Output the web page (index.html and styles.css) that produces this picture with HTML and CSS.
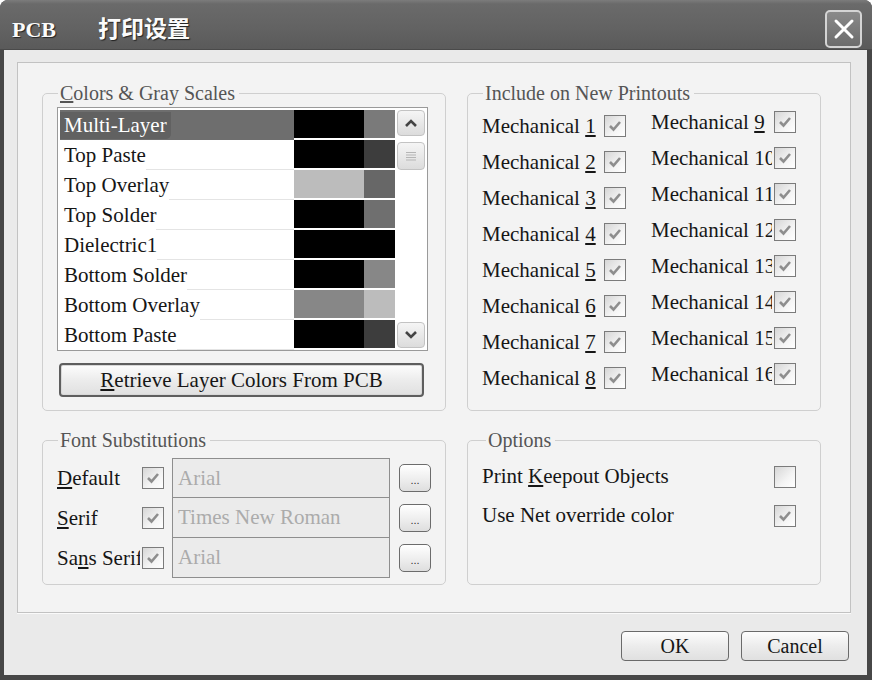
FILE: index.html
```html
<!DOCTYPE html>
<html>
<head>
<meta charset="utf-8">
<title>PCB 打印设置</title>
<link rel="stylesheet" href="styles.css">
</head>
<body>
<div class="window">
  <div class="titlebar">
    <div class="title"><span class="title-en">PCB</span><span class="title-cn">打印设置</span></div>
    <button class="close" aria-label="Close">
      <svg width="22" height="22" viewBox="0 0 22 22"><path d="M3 3 L19 19 M19 3 L3 19" stroke="#fff" stroke-width="3" stroke-linecap="round" fill="none"/></svg>
    </button>
  </div>
  <div class="frame">
    <div class="client">
      <div class="panel">
        <div class="group g-colors">
          <div class="group-title"><u>C</u>olors &amp; Gray Scales</div>
          <div class="layer-list">
            <div class="rows">
              <div class="row selected"><div class="name"><span>Multi-Layer</span></div><span class="sw c-k"></span><span class="sw2 c-77"></span></div>
              <div class="row"><div class="name"><span>Top Paste</span></div><span class="sw c-k"></span><span class="sw2 c-3c"></span></div>
              <div class="row"><div class="name"><span>Top Overlay</span></div><span class="sw c-bb"></span><span class="sw2 c-66"></span></div>
              <div class="row"><div class="name"><span>Top Solder</span></div><span class="sw c-k"></span><span class="sw2 c-70"></span></div>
              <div class="row"><div class="name"><span>Dielectric1</span></div><span class="sw c-k"></span><span class="sw2 c-k"></span></div>
              <div class="row"><div class="name"><span>Bottom Solder</span></div><span class="sw c-k"></span><span class="sw2 c-88"></span></div>
              <div class="row"><div class="name"><span>Bottom Overlay</span></div><span class="sw c-88"></span><span class="sw2 c-bb"></span></div>
              <div class="row"><div class="name"><span>Bottom Paste</span></div><span class="sw c-k"></span><span class="sw2 c-3c"></span></div>
            </div>
            <div class="scrollbar">
              <div class="sb-btn"><svg width="14" height="10" viewBox="0 0 14 10"><path d="M2 8 L7 3 L12 8" stroke="#444" stroke-width="2.6" fill="none"/></svg></div>
              <div class="sb-thumb"><svg width="12" height="12" viewBox="0 0 12 12"><path d="M1 2.5 H11 M1 5 H11 M1 7.5 H11 M1 10 H11" stroke="#b5b5b5" stroke-width="1" fill="none"/></svg></div>
              <div class="sb-track"></div>
              <div class="sb-btn"><svg width="14" height="10" viewBox="0 0 14 10"><path d="M2 2 L7 7 L12 2" stroke="#444" stroke-width="2.6" fill="none"/></svg></div>
            </div>
          </div>
          <button class="btn retrieve"><u>R</u>etrieve Layer Colors From PCB</button>
        </div>

        <div class="group g-include">
          <div class="group-title">Include on New Printouts</div>
          <div class="mech-grid">
            <div class="mech-col">
              <div class="chk-item"><span class="lbl">Mechanical <u>1</u></span><span class="cb"><svg viewBox="0 0 20 20"><path d="M5 10 L8.5 13.5 L15 6"/></svg></span></div>
              <div class="chk-item"><span class="lbl">Mechanical <u>2</u></span><span class="cb"><svg viewBox="0 0 20 20"><path d="M5 10 L8.5 13.5 L15 6"/></svg></span></div>
              <div class="chk-item"><span class="lbl">Mechanical <u>3</u></span><span class="cb"><svg viewBox="0 0 20 20"><path d="M5 10 L8.5 13.5 L15 6"/></svg></span></div>
              <div class="chk-item"><span class="lbl">Mechanical <u>4</u></span><span class="cb"><svg viewBox="0 0 20 20"><path d="M5 10 L8.5 13.5 L15 6"/></svg></span></div>
              <div class="chk-item"><span class="lbl">Mechanical <u>5</u></span><span class="cb"><svg viewBox="0 0 20 20"><path d="M5 10 L8.5 13.5 L15 6"/></svg></span></div>
              <div class="chk-item"><span class="lbl">Mechanical <u>6</u></span><span class="cb"><svg viewBox="0 0 20 20"><path d="M5 10 L8.5 13.5 L15 6"/></svg></span></div>
              <div class="chk-item"><span class="lbl">Mechanical <u>7</u></span><span class="cb"><svg viewBox="0 0 20 20"><path d="M5 10 L8.5 13.5 L15 6"/></svg></span></div>
              <div class="chk-item"><span class="lbl">Mechanical <u>8</u></span><span class="cb"><svg viewBox="0 0 20 20"><path d="M5 10 L8.5 13.5 L15 6"/></svg></span></div>
            </div>
            <div class="mech-col col-right">
              <div class="chk-item"><span class="lbl">Mechanical <u>9</u></span><span class="cb"><svg viewBox="0 0 20 20"><path d="M5 10 L8.5 13.5 L15 6"/></svg></span></div>
              <div class="chk-item"><span class="lbl">Mechanical 10</span><span class="cb"><svg viewBox="0 0 20 20"><path d="M5 10 L8.5 13.5 L15 6"/></svg></span></div>
              <div class="chk-item"><span class="lbl">Mechanical 11</span><span class="cb"><svg viewBox="0 0 20 20"><path d="M5 10 L8.5 13.5 L15 6"/></svg></span></div>
              <div class="chk-item"><span class="lbl">Mechanical 12</span><span class="cb"><svg viewBox="0 0 20 20"><path d="M5 10 L8.5 13.5 L15 6"/></svg></span></div>
              <div class="chk-item"><span class="lbl">Mechanical 13</span><span class="cb"><svg viewBox="0 0 20 20"><path d="M5 10 L8.5 13.5 L15 6"/></svg></span></div>
              <div class="chk-item"><span class="lbl">Mechanical 14</span><span class="cb"><svg viewBox="0 0 20 20"><path d="M5 10 L8.5 13.5 L15 6"/></svg></span></div>
              <div class="chk-item"><span class="lbl">Mechanical 15</span><span class="cb"><svg viewBox="0 0 20 20"><path d="M5 10 L8.5 13.5 L15 6"/></svg></span></div>
              <div class="chk-item"><span class="lbl">Mechanical 16</span><span class="cb"><svg viewBox="0 0 20 20"><path d="M5 10 L8.5 13.5 L15 6"/></svg></span></div>
            </div>
          </div>
        </div>

        <div class="group g-fonts">
          <div class="group-title">Font Substitutions</div>
          <div class="font-grid">
            <span class="flbl"><u>D</u>efault</span><span class="cb"><svg viewBox="0 0 20 20"><path d="M5 10 L8.5 13.5 L15 6"/></svg></span><span class="tbox">Arial</span><button class="dots">...</button>
            <span class="flbl"><u>S</u>erif</span><span class="cb"><svg viewBox="0 0 20 20"><path d="M5 10 L8.5 13.5 L15 6"/></svg></span><span class="tbox mid">Times New Roman</span><button class="dots">...</button>
            <span class="flbl">Sa<u>n</u>s Serif</span><span class="cb"><svg viewBox="0 0 20 20"><path d="M5 10 L8.5 13.5 L15 6"/></svg></span><span class="tbox mid">Arial</span><button class="dots">...</button>
          </div>
        </div>

        <div class="group g-options">
          <div class="group-title opt-title">Options</div>
          <div class="opt-list">
            <div class="opt-item"><span>Print <u>K</u>eepout Objects</span><span class="cb"></span></div>
            <div class="opt-item"><span>Use Net override color</span><span class="cb"><svg viewBox="0 0 20 20"><path d="M5 10 L8.5 13.5 L15 6"/></svg></span></div>
          </div>
        </div>
      </div>
      <div class="actions">
        <button class="btn dlg">OK</button>
        <button class="btn dlg">Cancel</button>
      </div>
    </div>
  </div>
</div>
</body>
</html>
```

FILE: styles.css
```css
* { box-sizing: border-box; }
html, body { margin: 0; padding: 0; background: #fff; }
body { font-family: "Liberation Serif", "Times New Roman", serif; color: #161616; }

.window {
  width: 872px; height: 680px;
  display: flex; flex-direction: column;
  border-radius: 8px 8px 0 0;
  overflow: hidden;
  background: #474747;
}

.titlebar {
  height: 50px; flex: none;
  display: flex; align-items: center; justify-content: space-between;
  padding: 0 10px 0 12px;
  background: linear-gradient(#7c7c7c 0px, #6a6a6a 4px, #626262 60%, #5a5a5a 100%);
  border-bottom: 1px solid #4a4a4a;
}
.title {
  font-family: "Liberation Serif", "Noto Sans CJK SC", serif;
  font-weight: bold; font-size: 22px; color: #fbfbfb;
  text-shadow: 1px 1px 1px #222;
  display: flex; align-items: baseline;
  margin-top: 4px;
}
.title-cn { margin-left: 42px; font-family: "Noto Sans CJK SC", sans-serif; font-size: 23px; }
.close {
  width: 37px; height: 38px; padding: 0;
  display: flex; align-items: center; justify-content: center;
  border: 2px solid #d4d4d4; border-radius: 5px;
  background: linear-gradient(#8a8a8a, #6c6c6c);
  margin-top: 8px;
}

.frame { flex: 1; display: flex; padding: 0 5px 5px 4px; background: #474747; }
.client {
  flex: 1; display: flex; flex-direction: column;
  padding: 12px 16px 0 13px;
  background: #eaeaea;
}

.panel {
  height: 551px;
  border: 1px solid #c2c2c2;
  box-shadow: 0 1px 0 #fafafa;
  background: #f3f3f3;
  padding: 30px 29px 0 24px;
  display: grid;
  grid-template-columns: 404px 354px;
  grid-template-rows: 318px 145px;
  column-gap: 21px; row-gap: 29px;
}

.group {
  border: 1px solid #cfcfcf;
  border-radius: 5px;
  display: flex; flex-direction: column;
}
.group-title {
  margin: -12px 0 0 15px;
  padding: 0 4px 0 2px;
  width: fit-content;
  background: #f3f3f3;
  font-size: 20px; line-height: 22px;
  color: #555;
}
.opt-title { margin-left: 18px; }

/* layer list */
.layer-list {
  margin: 3px 0 0 14px;
  width: 371px; height: 244px;
  border: 1px solid #9a9a9a;
  background: #fff;
  display: flex;
}
.rows { flex: 1; padding: 2px 0 0 2px; display: flex; flex-direction: column; }
.row { height: 30px; display: flex; font-size: 21px; }
.name {
  flex: 1; display: flex; align-items: flex-end;
  padding-bottom: 1px;
}
.name span { padding: 0 0 0 4px; line-height: 27px; white-space: nowrap; }
.name::after { content: ""; flex: 1; border-bottom: 1px solid #e4e4e4; margin-bottom: -1px; }
.row.selected .name { background: #6e6e6e; }
.row.selected .name span { color: #fff; background: #616161; border-radius: 0 0 5px 0; padding-right: 4px; }
.row.selected .name::after { border-bottom-color: transparent; }
.sw { width: 70px; height: 28px; }
.sw2 { width: 31px; height: 28px; }
.c-k { background: #000; }
.c-77 { background: #7a7a7a; }
.c-3c { background: #3d3d3d; }
.c-bb { background: #bcbcbc; }
.c-66 { background: #676767; }
.c-70 { background: #6f6f6f; }
.c-88 { background: #878787; }

.scrollbar {
  width: 32px; padding: 2px;
  display: flex; flex-direction: column; gap: 6px;
  background: #fff;
}
.sb-btn, .sb-thumb {
  height: 26px;
  border: 1px solid #c3c3c3; border-radius: 4px;
  background: linear-gradient(#f5f5f5, #dcdcdc);
  display: flex; align-items: center; justify-content: center;
}
.sb-thumb { height: 28px; }
.sb-track { flex: 1; }

.btn {
  font-family: "Liberation Serif", "Times New Roman", serif;
  color: #161616;
  background: linear-gradient(#fdfdfd, #ececec 50%, #e0e0e0);
  border: 1px solid #6a6a6a; border-radius: 4px;
  padding: 0;
}
.retrieve {
  margin: 12px 0 0 16px;
  width: 365px; height: 34px;
  font-size: 21px;
  border: 2px solid #5e5e5e;
  box-shadow: inset 0 0 0 1px #d8d8d8;
}

/* mechanical checkboxes */
.mech-grid {
  display: grid; grid-template-columns: 144px 146px; column-gap: 25px;
  padding: 4px 0 0 14px;
}
.mech-col { display: flex; flex-direction: column; }
.col-right { margin-top: -4px; }
.chk-item { height: 36px; display: flex; align-items: center; font-size: 21px; }
.lbl { width: 121px; overflow: hidden; white-space: nowrap; }

.cb {
  width: 22px; height: 22px; flex: none;
  margin-left: 2px;
  border: 1px solid #7b7b7b;
  background: linear-gradient(135deg, #d6d6d6, #f4f4f4 60%, #fff);
  display: flex;
}
.cb svg { width: 20px; height: 20px; }
.cb path { stroke: #8e8e8e; stroke-width: 2.6; fill: none; }

/* font substitutions */
.font-grid {
  display: grid;
  grid-template-columns: 83px 24px 226px 41px;
  grid-template-rows: 40px 40px 40px;
  padding: 7px 0 0 14px;
  align-items: center;
  font-size: 21px;
}
.flbl { overflow: hidden; white-space: nowrap; width: 83px; }
.tbox {
  margin-left: 8px; align-self: stretch;
  border: 1px solid #8e8e8e;
  background: #ebebeb;
  color: #ababab;
  padding: 4px 0 0 5px;
  line-height: 30px;
}
.tbox.mid { border-top: none; }
.dots {
  margin-left: 9px;
  width: 32px; height: 28px;
  border: 1px solid #6c6c6c; border-radius: 5px;
  background: linear-gradient(#fff, #ececec 60%, #dedede);
  font-size: 11px; line-height: 11px; color: #333;
  display: flex; align-items: flex-end; justify-content: center;
  padding: 0 0 5px 0;
  font-family: "Liberation Sans", sans-serif;
}

/* options */
.opt-list { padding: 6px 24px 0 14px; display: flex; flex-direction: column; }
.opt-item { height: 39px; display: flex; align-items: center; justify-content: space-between; font-size: 21px; }

/* dialog buttons */
.actions {
  display: flex; justify-content: flex-end; gap: 12px;
  padding: 18px 2px 0 0;
}
.dlg { width: 108px; height: 30px; font-size: 20px; }
```
